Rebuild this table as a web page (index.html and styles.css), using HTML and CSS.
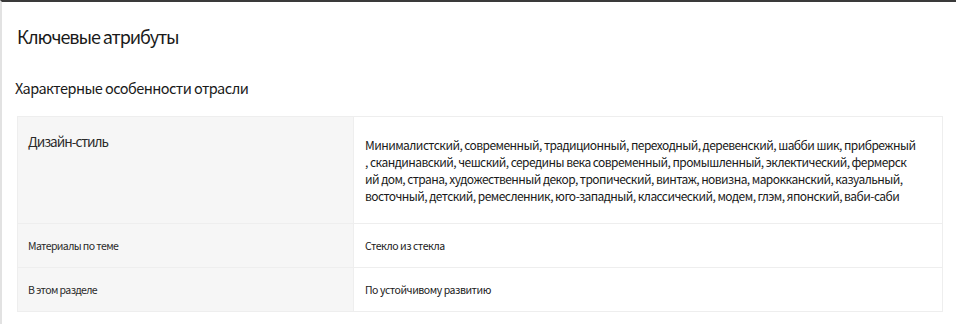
FILE: index.html
```html
<!DOCTYPE html>
<html lang="ru">
<head>
  <meta charset="UTF-8">
  <meta name="viewport" content="width=device-width, initial-scale=1">
  <title>Ключевые атрибуты</title>
  <link rel="stylesheet" href="styles.css">
</head>
<body>

<div class="attrs-panel">
  <h2 class="panel-title">Ключевые атрибуты</h2>
  <h3 class="section-title">Характерные особенности отрасли</h3>

  <div class="attrs-table">
    <div class="attr-row attr-row-big">
      <div class="attr-name">Дизайн-стиль</div>
      <div class="attr-value">
        <div class="attr-text">Минималистский, современный, традиционный, переходный, деревенский, шабби шик, прибрежный<br>, скандинавский, чешский, середины века современный, промышленный, эклектический, фермерск<br>ий дом, страна, художественный декор, тропический, винтаж, новизна, марокканский, казуальный,<br>восточный, детский, ремесленник, юго-западный, классический, модем, глэм, японский, ваби-саби</div>
      </div>
    </div>
    <div class="attr-row">
      <div class="attr-name">Материалы по теме</div>
      <div class="attr-value">Стекло из стекла</div>
    </div>
    <div class="attr-row">
      <div class="attr-name">В этом разделе</div>
      <div class="attr-value">По устойчивому развитию</div>
    </div>
  </div>
</div>

</body>
</html>
```

FILE: styles.css
```css
body {
  font-family: 'Noto Sans CJK SC', 'Noto Sans', sans-serif;
  margin: 0;
  padding: 0;
  background: #fff;
  color: #1a1a1a;
}
.attrs-panel {
  height: 322px;
  border-top: 2px solid #3a3a3a;
  border-left: 2px solid #e2e2e2;
  padding: 0 13px 0 15px;
  overflow: hidden;
}
.panel-title {
  font-size: 18px;
  font-weight: normal;
  letter-spacing: -1.1px;
  margin: 0;
  padding-top: 23px;
  line-height: 22px;
}
.section-title {
  font-size: 14.5px;
  font-weight: normal;
  letter-spacing: -0.55px;
  margin: 0;
  margin-top: 31px;
  margin-left: -2px;
  line-height: 20px;
}
.attrs-table {
  margin-top: 18px;
  border: 1px solid #eee;
}
.attr-row {
  display: flex;
  border-top: 1px solid #eee;
  height: 43px;
}
.attr-row:first-child {
  border-top: none;
}
.attr-row-big {
  height: 106px;
}
.attr-name {
  width: 325px;
  flex-shrink: 0;
  background: #f6f6f6;
  border-right: 1px solid #eee;
  padding: 14px 0 0 10px;
  font-size: 10.5px;
  letter-spacing: -0.6px;
  color: #2a2a2a;
}
.attr-row-big .attr-name {
  font-size: 13.5px;
  letter-spacing: -1px;
  padding-top: 14px;
}
.attr-value {
  flex: 1;
  padding: 14px 0 0 11px;
  font-size: 10.5px;
  letter-spacing: -0.45px;
  color: #1a1a1a;
}
.attr-row-big .attr-value {
  padding-top: 19px;
}
.attr-text {
  font-size: 12px;
  line-height: 17px;
  letter-spacing: -0.56px;
  white-space: nowrap;
}
```
